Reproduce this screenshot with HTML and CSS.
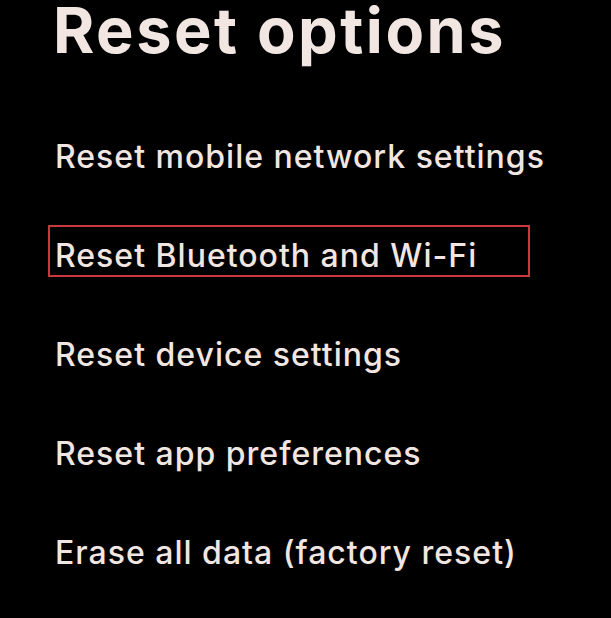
FILE: index.html
```html
<!DOCTYPE html>
<html lang="en">
  <head>
    <meta charset="UTF-8" />
    <meta name="viewport" content="width=device-width, initial-scale=1.0" />
    <title>Reset options</title>
    <link rel="stylesheet" href="styles.css">
  </head>
  <body>
    <div class="page">
      <h1 class="title">Reset options</h1>
      <ul class="options">
        <li class="option">Reset mobile network settings</li>
        <li class="option marked">Reset Bluetooth and Wi-Fi</li>
        <li class="option">Reset device settings</li>
        <li class="option">Reset app preferences</li>
        <li class="option">Erase all data (factory reset)</li>
      </ul>
    </div>
  </body>
</html>
```

FILE: styles.css
```css
html,
body {
  margin: 0;
  background: #000;
}
.page {
  width: 611px;
  height: 618px;
  overflow: hidden;
  padding-left: 48px;
  box-sizing: border-box;
  font-family: Inter, "Noto Sans", sans-serif;
  color: #f1e6e1;
}
.title {
  margin: 0;
  padding-left: 5px;
  font-size: 63px;
  font-weight: 700;
  line-height: 60px;
  letter-spacing: 2.5px;
}
.options {
  list-style: none;
  margin: 66px 0 0;
  padding: 0;
}
.option {
  width: 482px;
  height: 52px;
  box-sizing: border-box;
  border: 2px solid transparent;
  padding-left: 5px;
  font-size: 32px;
  font-weight: 500;
  line-height: 58px;
  letter-spacing: 1px;
  margin-bottom: 47px;
  white-space: nowrap;
}
.option.marked {
  border-color: #c8383c;
}
```
